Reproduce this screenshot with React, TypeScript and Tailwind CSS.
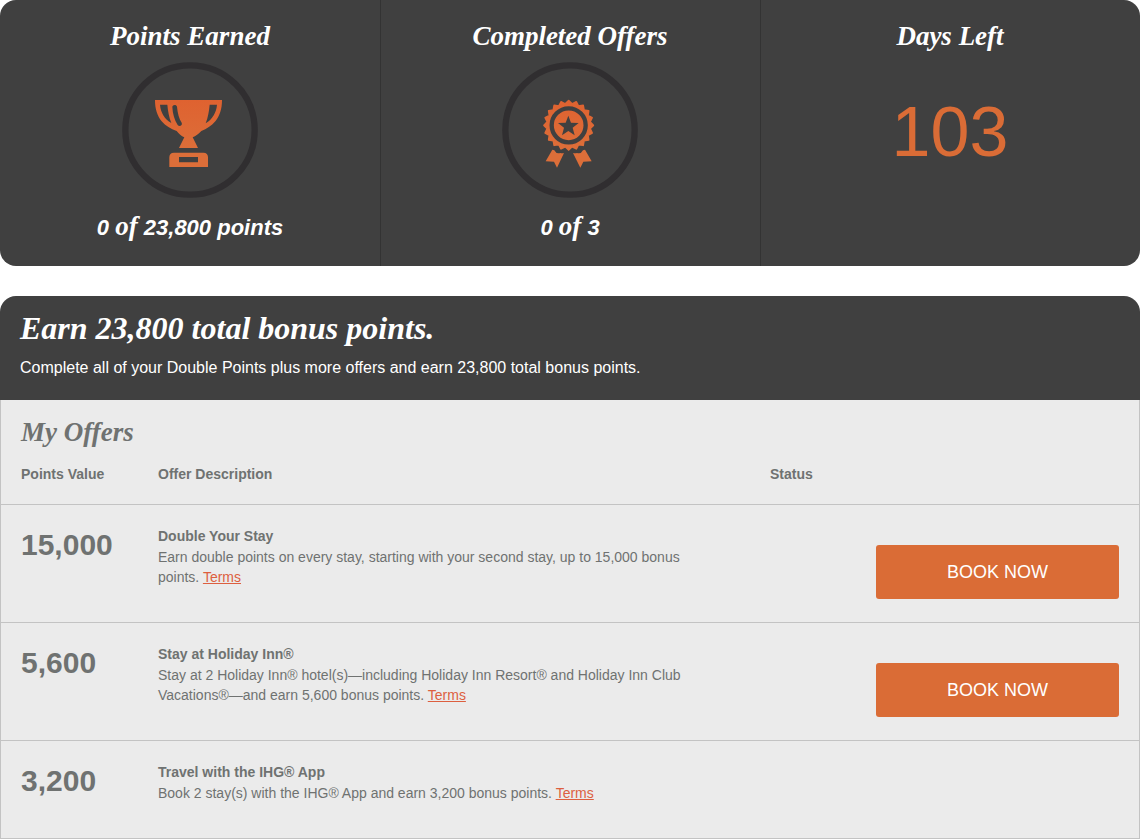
import type { ReactNode } from "react";

const offers = [
  {
    points: "15,000",
    title: "Double Your Stay",
    desc: "Earn double points on every stay, starting with your second stay, up to 15,000 bonus points.",
    bookable: true,
  },
  {
    points: "5,600",
    title: "Stay at Holiday Inn®",
    desc: "Stay at 2 Holiday Inn® hotel(s)—including Holiday Inn Resort® and Holiday Inn Club Vacations®—and earn 5,600 bonus points.",
    bookable: true,
  },
  {
    points: "3,200",
    title: "Travel with the IHG® App",
    desc: "Book 2 stay(s) with the IHG® App and earn 3,200 bonus points.",
    bookable: false,
  },
];

const serif = "font-['Liberation_Serif',serif] font-bold italic";

// points around a circle, alternating between tip and notch
const sealPoints = Array.from({ length: 40 }, (_, i) => {
  const r = i % 2 === 0 ? 74 : 65;
  const a = (i * Math.PI) / 20 - Math.PI / 2;
  return `${(236 + r * Math.cos(a)).toFixed(1)},${(226 + r * Math.sin(a)).toFixed(1)}`;
}).join(" ");

function Badge({ id, label, children }: { id: string; label: string; children: ReactNode }) {
  return (
    <svg viewBox="36 36 408 408" className="h-[136px] w-[136px]" role="img" aria-label={label}>
      <defs>
        <linearGradient id={id} gradientUnits="userSpaceOnUse" x1="0" y1="150" x2="0" y2="300">
          <stop offset="0" stopColor="#df6230" />
          <stop offset="1" stopColor="#dc6e39" />
        </linearGradient>
      </defs>
      <circle cx="240" cy="240" r="194" fill="none" stroke="#302e30" strokeWidth="19" />
      {children}
    </svg>
  );
}

function Trophy() {
  return (
    <Badge id="trophyFill" label="Trophy">
      <g fill="url(#trophyFill)" fillRule="evenodd">
        <path d="M135 150H336C336 177 329 198 316 214C304 228 290 237 274 243C266 252 257 258 248 262L264 294H207L223 262C214 258 207 252 200 243C182 237 167 228 155 214C142 198 135 177 135 150ZM150 164C152 188 164 208 184 219C177 202 174 184 172 164ZM299 164C297 184 294 202 287 220C307 208 319 188 321 164ZM187 171C187 163 200 163 201 170C203 190 207 206 215 218C219 226 208 231 203 225C193 209 188 192 187 171Z" />
        <path d="M178 351V322Q178 308 192 308H280Q294 308 294 322V351ZM207 321V337H264V321Z" />
      </g>
    </Badge>
  );
}

function Rosette() {
  return (
    <Badge id="rosetteFill" label="Award rosette">
      <g fill="url(#rosetteFill)">
        <polygon points={sealPoints} stroke="url(#rosetteFill)" strokeWidth="5" strokeLinejoin="round" />
        <path d="M187 299L193 301Q199 313 211 309Q216 311 222 309L201 353L192 335L167 334Z" />
        <path d="M285 299L279 301Q273 313 261 309Q256 311 249 309L271 353L280 335L305 334Z" />
      </g>
      <circle cx="236" cy="226" r="51" fill="none" stroke="#404040" strokeWidth="13" />
      <path
        d="M235 197L243 218L266 219L248 233L254 256L235 243L216 256L222 233L204 219L227 218Z"
        fill="#404040"
      />
    </Badge>
  );
}

function Stat({ title, children }: { title: string; children: ReactNode }) {
  return (
    <div className="flex flex-col items-center px-4 py-5 shadow-[inset_1px_0_#333] first:shadow-none">
      <h2 className={`${serif} text-[27px] leading-8`}>{title}</h2>
      {children}
    </div>
  );
}

function Progress({ before, after }: { before: string; after: string }) {
  return (
    <p className="mt-3 text-[22px] leading-9 font-bold italic">
      {before} <span className="font-['Liberation_Serif',serif] text-[27px] leading-none">of</span> {after}
    </p>
  );
}

export default function App() {
  return (
    <main className="bg-white font-['Liberation_Sans',Arial,sans-serif] text-[#6f7271]">
      <section className="grid grid-cols-3 rounded-2xl bg-[#404040] text-white">
        <Stat title="Points Earned">
          <div className="mt-[10px]">
            <Trophy />
          </div>
          <Progress before="0" after="23,800 points" />
        </Stat>
        <Stat title="Completed Offers">
          <div className="mt-[10px]">
            <Rosette />
          </div>
          <Progress before="0" after="3" />
        </Stat>
        <Stat title="Days Left">
          <p className="mt-10 text-[70px] leading-[80px] text-[#da6c36]">103</p>
        </Stat>
      </section>

      <section className="mt-[30px]">
        <header className="rounded-t-2xl bg-[#404040] px-5 pt-3 pb-5 text-white">
          <h2 className={`${serif} text-[32px] leading-10`}>Earn 23,800 total bonus points.</h2>
          <p className="mt-2 text-base">Complete all of your Double Points plus more offers and earn 23,800 total bonus points.</p>
        </header>

        <div className="border border-t-0 border-[#c3c3c3] bg-[#ebebeb]">
          <h3 className={`${serif} px-5 pt-4 text-[27px] leading-8`}>My Offers</h3>
          <table className="w-full table-fixed text-left text-sm">
            <thead>
              <tr className="align-top">
                <th scope="col" className="h-14 w-[157px] pt-4 pl-5">Points Value</th>
                <th scope="col" className="pt-4">Offer Description</th>
                <th scope="col" className="w-[106px] pt-4">Status</th>
                <td className="w-[263px]" />
              </tr>
            </thead>
            <tbody>
              {offers.map((offer) => (
                <tr key={offer.title} className="border-t border-[#c3c3c3] align-top">
                  <td className="pt-5 pl-5 text-[30px] leading-10 font-bold">{offer.points}</td>
                  <td className="pt-5 pr-20 pb-[35px] leading-5">
                    <h4 className="leading-[22px] font-bold">{offer.title}</h4>
                    <p>
                      {offer.desc}{" "}
                      <a href="#terms" className="text-[#dd5f3f] underline">Terms</a>
                    </p>
                  </td>
                  <td />
                  <td className="pr-5">
                    {offer.bookable && (
                      <button
                        type="button"
                        className="mt-10 mb-[23px] h-[54px] w-full rounded-[3px] bg-[#da6c36] text-lg text-white"
                      >
                        BOOK NOW
                      </button>
                    )}
                  </td>
                </tr>
              ))}
            </tbody>
          </table>
        </div>
      </section>
    </main>
  );
}
